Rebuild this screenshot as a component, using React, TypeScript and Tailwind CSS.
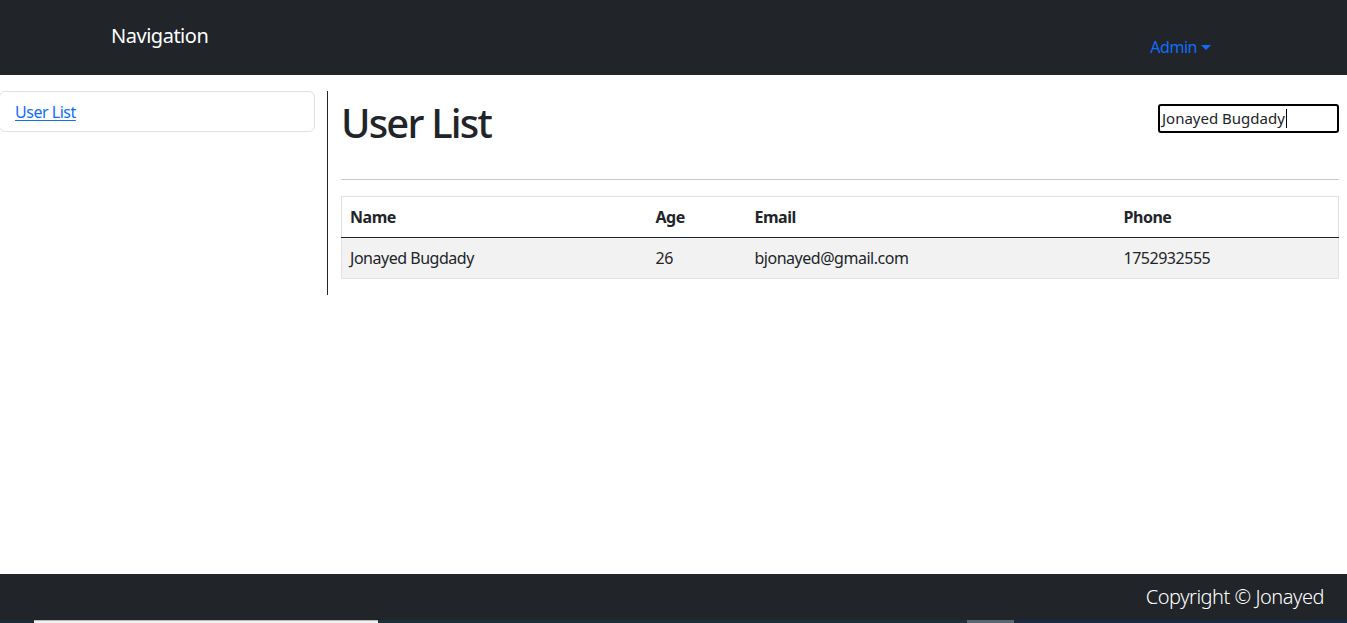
const USERS = [
  { name: "Jonayed Bugdady", age: 26, email: "bjonayed@gmail.com", phone: "1752932555" },
];

export default function App() {
  return (
    <div className="flex flex-col h-[623px] overflow-hidden bg-white text-[#212529] tracking-[-0.03em] font-['Noto_Sans',sans-serif]">
      {/* navbar */}
      <header className="h-[75px] shrink-0 bg-[#212529] flex items-start">
        <div className="pl-[111px] pt-[23px] text-[20px] leading-[26px] text-white">Navigation</div>
        <div className="ml-auto mr-[136px] pt-[36px] flex items-center gap-[4px] text-[16px] leading-[22px] text-[#0d6efd]">
          Admin
          <span className="mt-[1px] border-x-[5px] border-t-[5px] border-x-transparent border-t-[#0d6efd]" />
        </div>
      </header>

      {/* body */}
      <div className="flex-1 flex items-start pt-4">
        <aside className="w-[316px] shrink-0 -ml-px">
          <div className="h-[41px] border border-[#dee2e6] rounded-md px-[15px] flex items-center">
            <a href="#" className="text-[16px] text-[#0d6efd] underline underline-offset-2">User List</a>
          </div>
        </aside>
        <div className="ml-3 w-px h-[204px] bg-[#212529]" />
        <main className="flex-1 pl-[13px] pr-2">
          <div className="flex items-start justify-between pt-[8px]">
            <h1 className="text-[40px] leading-[48px] font-medium tracking-[-0.045em]">User List</h1>
            <div className="mt-[5px] w-[181px] h-[29px] border-2 border-black rounded-[3px] flex items-center pl-[2px] text-[15px] tracking-normal">
              Jonayed Bugdady
              <span className="w-px h-[19px] bg-black ml-px" />
            </div>
          </div>
          <hr className="mt-[32px] border-t border-[#c8c9ca]" />
          <table className="mt-4 w-full border border-[#dee2e6] border-collapse text-[16px] leading-6 table-fixed">
            <colgroup>
              <col className="w-[306px]" />
              <col className="w-[99px]" />
              <col className="w-[369px]" />
              <col />
            </colgroup>
            <thead>
              <tr className="border-b border-[#212529] text-left">
                <th className="px-2 py-2 font-bold">Name</th>
                <th className="px-2 py-2 font-bold">Age</th>
                <th className="px-2 py-2 font-bold">Email</th>
                <th className="px-2 py-2 font-bold">Phone</th>
              </tr>
            </thead>
            <tbody>
              {USERS.map((u) => (
                <tr key={u.email} className="bg-[#f2f2f2]">
                  <td className="px-2 py-2">{u.name}</td>
                  <td className="px-2 py-2">{u.age}</td>
                  <td className="px-2 py-2">{u.email}</td>
                  <td className="px-2 py-2">{u.phone}</td>
                </tr>
              ))}
            </tbody>
          </table>
        </main>
      </div>

      {/* footer */}
      <footer className="h-[46px] shrink-0 bg-[#212529] flex items-center justify-end pr-[23px] text-[20px] font-light text-white">
        Copyright © Jonayed
      </footer>
      <div className="h-[3px] shrink-0 flex bg-[#1b2a33]">
        <div className="w-[34px]" />
        <div className="w-[344px] bg-[#f0f0f0] border-t border-[#bbb]" />
        <div className="w-[589px] bg-[#1d3038]" />
        <div className="w-[47px] bg-[#5a6670]" />
        <div className="flex-1 bg-[#1a2a40]" />
      </div>
    </div>
  );
}
